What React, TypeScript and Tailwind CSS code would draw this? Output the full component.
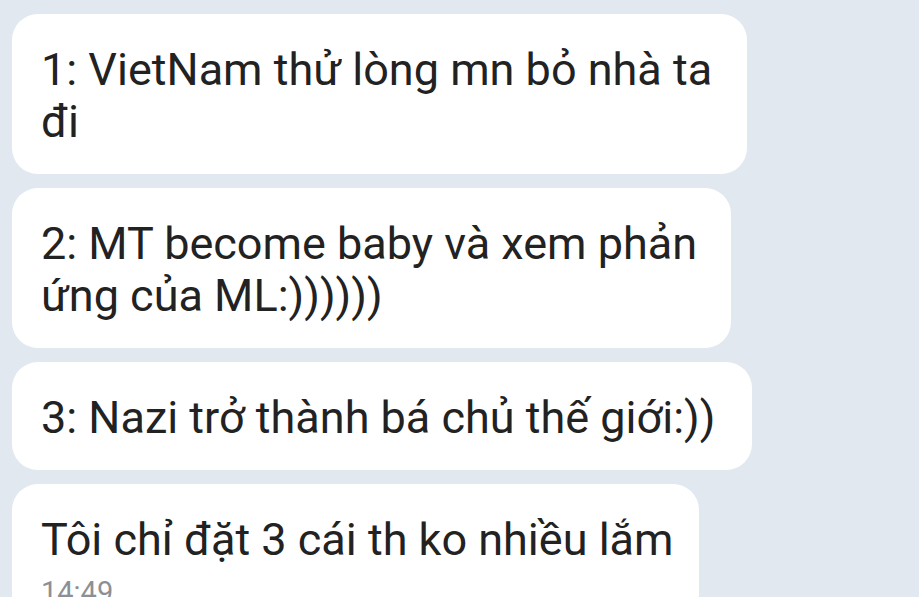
const messages = [
  { id: 1, width: "w-[735px]", lines: ["1: VietNam thử lòng mn bỏ nhà ta", "đi"] },
  { id: 2, width: "w-[719px]", lines: ["2: MT become baby và xem phản", "ứng của ML:))))))"] },
  { id: 3, width: "w-[740px]", lines: ["3: Nazi trở thành bá chủ thế giới:))"] },
];

function App() {
  return (
    <div
      className="h-[597px] w-[919px] overflow-hidden bg-[#e2e8f0] pl-3 pt-[14px] flex flex-col gap-[14px]"
      style={{ fontFamily: "Roboto, 'Noto Sans', sans-serif" }}
    >
      {messages.map((m) => (
        <div
          key={m.id}
          className={`${m.width} shrink-0 rounded-[26px] bg-white pl-[29px] pt-[30px] pb-[26px] text-[45px] leading-[52px] text-[#222222]`}
        >
          {m.lines.map((line, i) => (
            <div key={i} className="whitespace-nowrap">
              {line}
            </div>
          ))}
        </div>
      ))}

      {/* LAST MESSAGE */}
      <div className="w-[687px] shrink-0 rounded-t-[26px] bg-white pl-[29px] pt-[30px] pb-6 text-[#222222]">
        <div className="whitespace-nowrap text-[45px] leading-[52px]">
          Tôi chỉ đặt 3 cái th ko nhiều lắm
        </div>
        <div className="mt-[10px] text-[29px] leading-[32px] text-[#8c9096]">14:49</div>
      </div>
    </div>
  );
}

export default App;
